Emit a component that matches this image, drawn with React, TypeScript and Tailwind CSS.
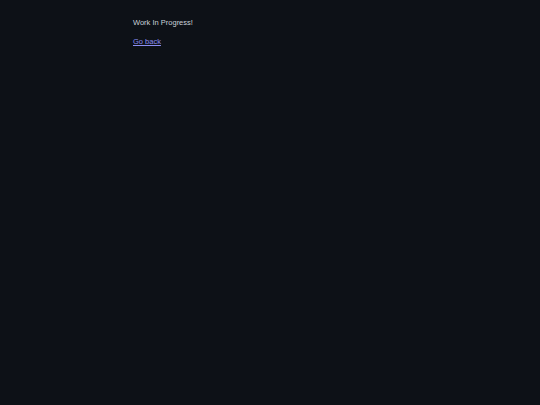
export default function App() {
  return (
    <div className="min-h-screen bg-[#0d1117] text-[#c9d1d9] font-['Liberation_Sans',Arial,sans-serif] text-[7.5px] leading-[10px]">
      <div className="pl-[133px] pt-[18px] flex flex-col gap-[9px]">
        <p>Work In Progress!</p>
        <a href="#" className="text-[#8b8ef2] underline w-fit">
          Go back
        </a>
      </div>
    </div>
  );
}
